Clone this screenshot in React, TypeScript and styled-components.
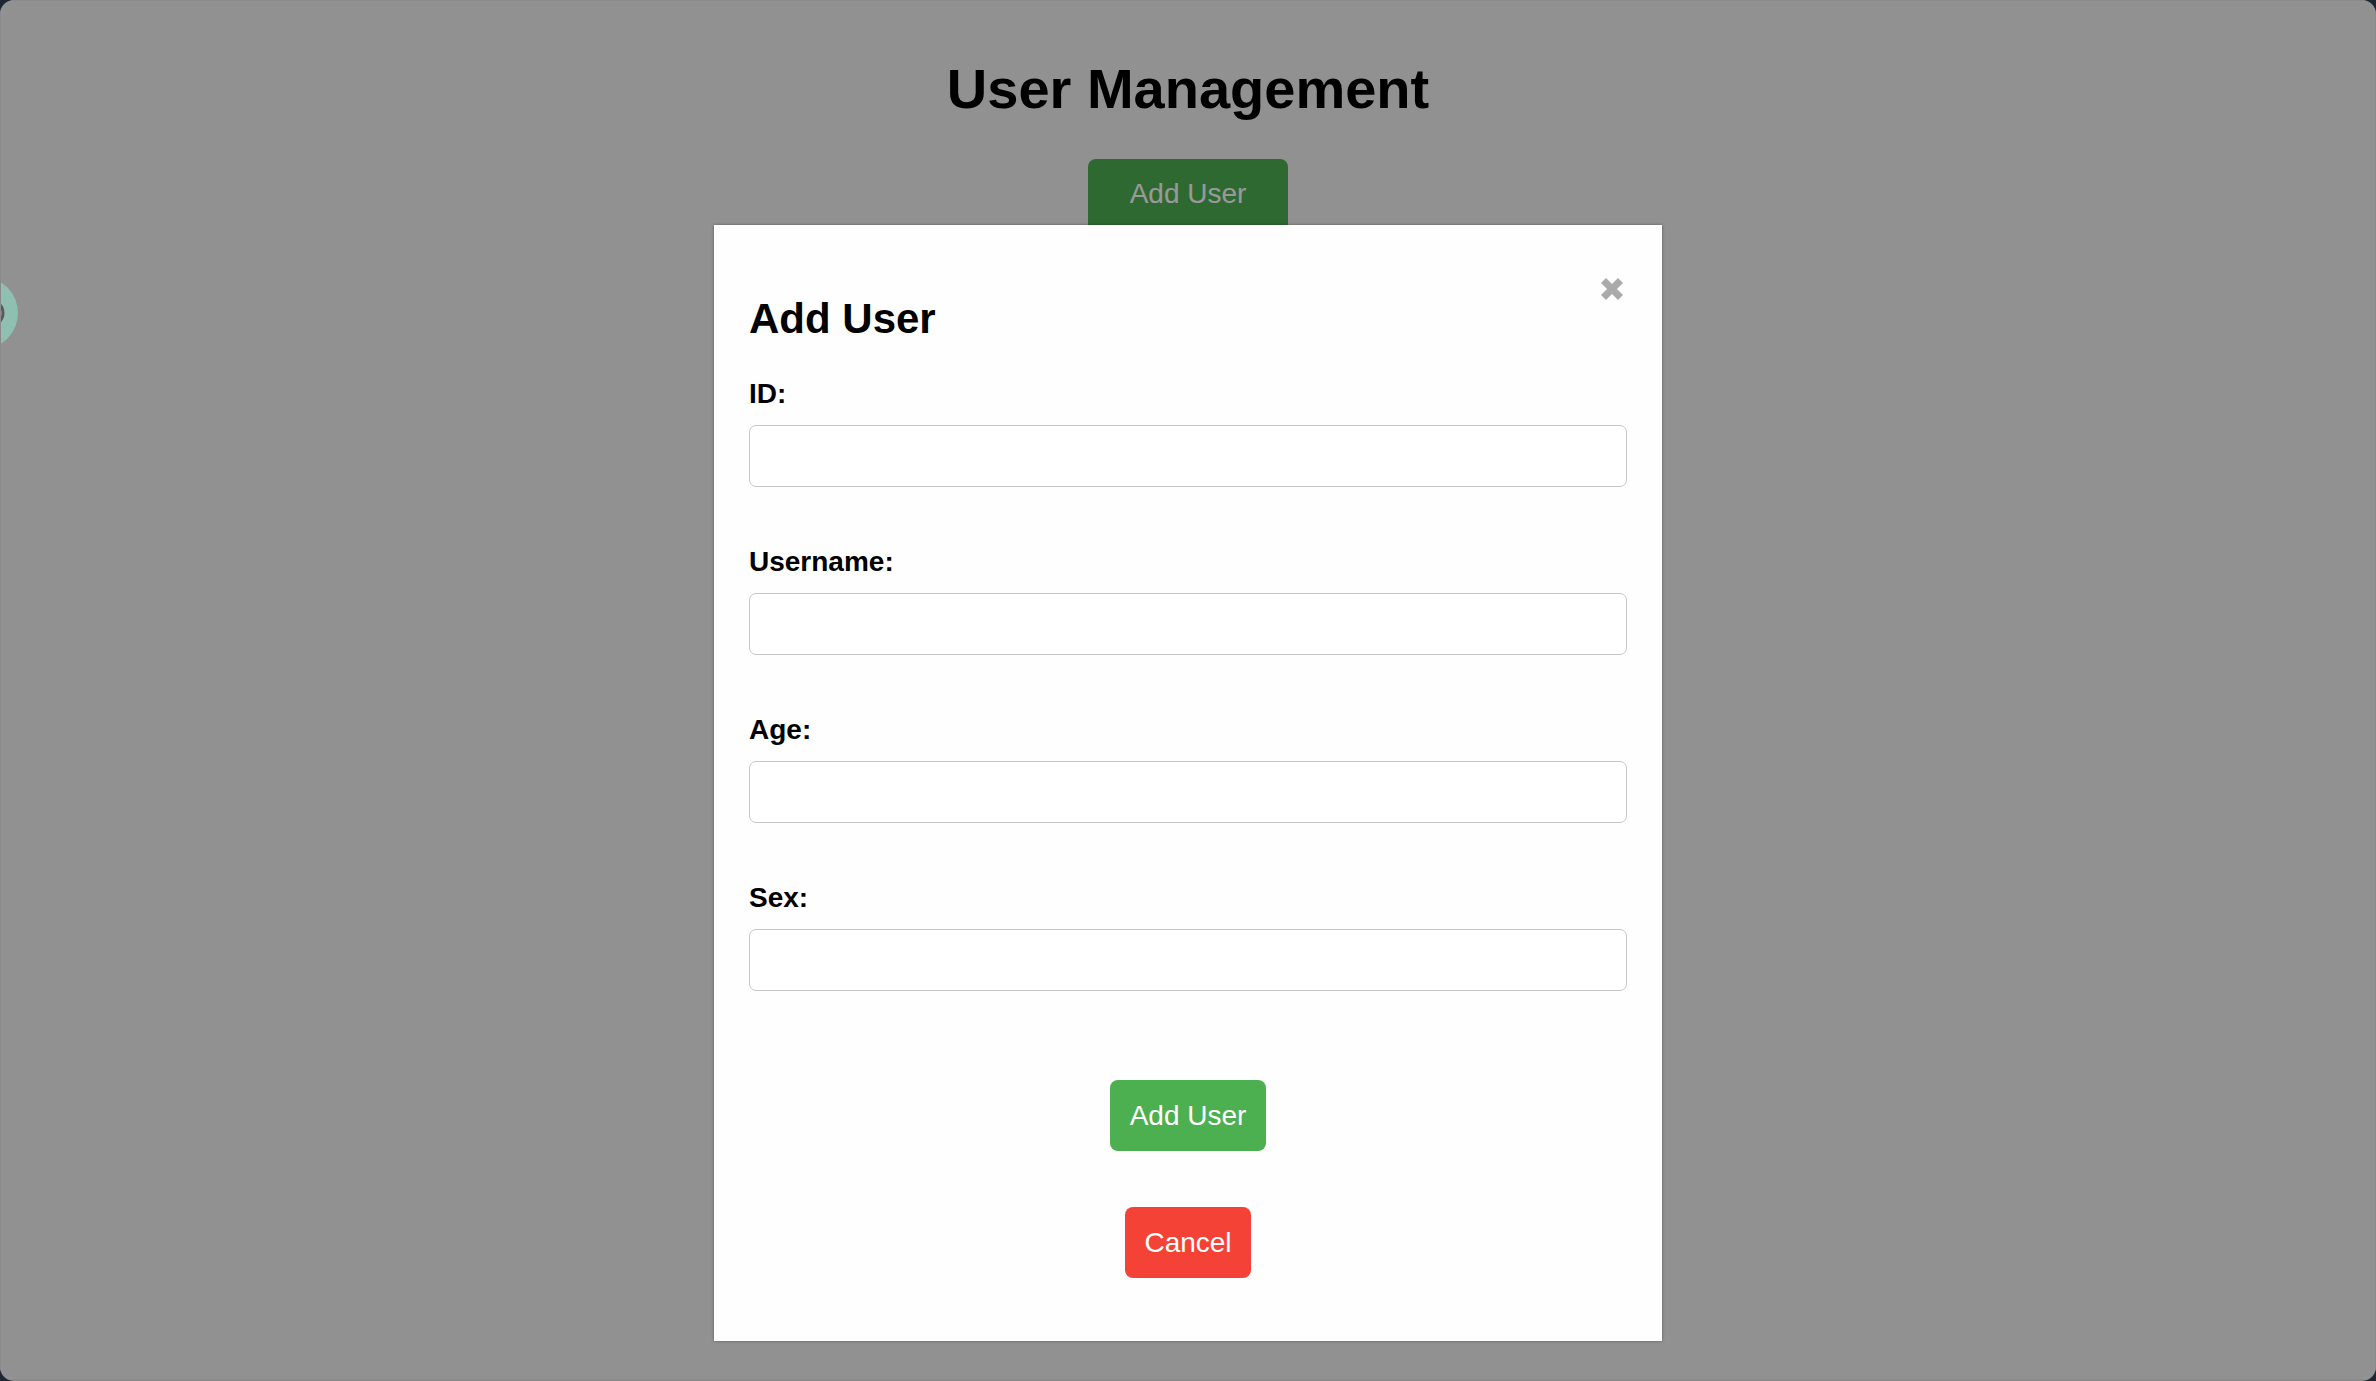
import React from "react";
import styled, { createGlobalStyle } from "styled-components";

const GlobalStyle = createGlobalStyle`
  html, body {
    margin: 0;
    padding: 0;
    background: #1d2733;
  }
  body {
    font-family: "Liberation Sans", Arial, sans-serif;
  }
  * { box-sizing: border-box; }
`;

const Window = styled.div`
  position: relative;
  height: 100vh;
  border-radius: 14px;
  overflow: hidden;
  background: #f2f2f2;
  border: 1px solid #8a8a8a;
  border-bottom-width: 2px;
`;

const Page = styled.main`
  display: flex;
  flex-direction: column;
  align-items: center;
  padding-top: 56px;
`;

const Title = styled.h1`
  margin: 0 0 38px;
  font-size: 56px;
  line-height: 64px;
  font-weight: 700;
  color: #000;
`;

const Button = styled.button<{ $variant: "add" | "cancel"; $size?: "lg" | "md" }>`
  border: none;
  border-radius: 8px;
  font-family: "Liberation Sans", Arial, sans-serif;
  font-size: 28px;
  line-height: 32px;
  color: #fff;
  cursor: pointer;
  background: ${(p) => (p.$variant === "add" ? "#4caf50" : "#f44336")};
  padding: ${(p) => (p.$size === "lg" ? "19px 42px 23px" : "19.5px 19.5px")};
`;

const Widget = styled.div`
  position: absolute;
  left: -55px;
  top: 276px;
  width: 72px;
  height: 72px;
  border-radius: 50%;
  background: #8fbfb0;
  z-index: 5;
`;

const Overlay = styled.div`
  position: absolute;
  inset: 0;
  background: rgba(0, 0, 0, 0.4);
  display: flex;
  justify-content: center;
  align-items: flex-start;
  padding-top: 224px;
`;

const Modal = styled.div`
  position: relative;
  width: 948px;
  padding: 35px;
  background: #fefefe;
  box-shadow: 0 0 3px rgba(0, 0, 0, 0.35);
`;

const CloseButton = styled.button`
  position: absolute;
  top: 52px;
  right: 38px;
  width: 24px;
  height: 24px;
  padding: 0;
  border: none;
  background: transparent;
  cursor: pointer;
  display: flex;
`;

const ModalTitle = styled.h2`
  margin: 35px 0 35px;
  font-size: 42px;
  line-height: 48px;
  font-weight: 700;
  color: #000;
`;

const Form = styled.form`
  display: flex;
  flex-direction: column;
  gap: 59px;
`;

const Field = styled.div`
  display: flex;
  flex-direction: column;
`;

const Label = styled.label`
  font-size: 28px;
  line-height: 32px;
  font-weight: 700;
  color: #000;
  margin-bottom: 15px;
`;

const Input = styled.input`
  width: 100%;
  height: 62px;
  border: 1px solid #c6c6c6;
  border-radius: 7px;
  background: #fff;
  font-family: "Liberation Sans", Arial, sans-serif;
  font-size: 26px;
  padding: 0 16px;
  outline: none;
`;

const Actions = styled.div`
  display: flex;
  flex-direction: column;
  align-items: center;
  gap: 56px;
  margin-top: 30px;
  padding-bottom: 28px;
`;

const CloseIcon = () => (
  <svg width="24" height="24" viewBox="0 0 24 24">
    <path d="M3.5 3.5 L20.5 20.5 M20.5 3.5 L3.5 20.5" stroke="#aaaaaa" strokeWidth="7" strokeLinecap="butt" />
  </svg>
);

const fields = [
  { id: "id", label: "ID:" },
  { id: "username", label: "Username:" },
  { id: "age", label: "Age:" },
  { id: "sex", label: "Sex:" },
];

export default function App() {
  return (
    <>
      <GlobalStyle />
      <Window>
        <Page>
          <Title>User Management</Title>
          <Button type="button" $variant="add" $size="lg">
            Add User
          </Button>
        </Page>
        <Overlay>
          <Modal>
            <CloseButton type="button" aria-label="Close">
              <CloseIcon />
            </CloseButton>
            <ModalTitle>Add User</ModalTitle>
            <Form onSubmit={(e) => e.preventDefault()}>
              {fields.map((f) => (
                <Field key={f.id}>
                  <Label htmlFor={f.id}>{f.label}</Label>
                  <Input id={f.id} type="text" />
                </Field>
              ))}
              <Actions>
                <Button type="submit" $variant="add">
                  Add User
                </Button>
                <Button type="button" $variant="cancel">
                  Cancel
                </Button>
              </Actions>
            </Form>
          </Modal>
        </Overlay>
        <Widget>
          <svg width="72" height="72" viewBox="0 0 72 72">
            <circle cx="44.5" cy="36" r="12.5" fill="none" stroke="#5a5a5a" strokeWidth="3" />
          </svg>
        </Widget>
      </Window>
    </>
  );
}
